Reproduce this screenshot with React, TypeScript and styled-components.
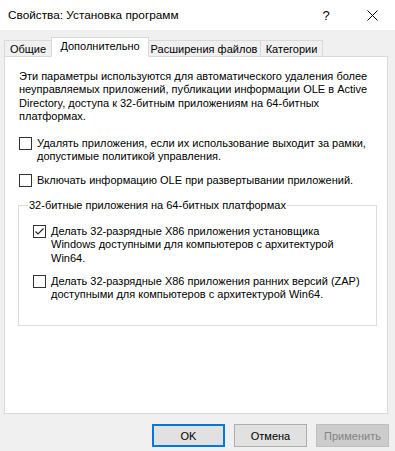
import React from "react";
import styled, { createGlobalStyle } from "styled-components";

const Global = createGlobalStyle`
  html, body { margin: 0; padding: 0; background: #f0f0f0; }
  body { font-family: "Liberation Sans", Arial, sans-serif; font-size: 11px; color: #000; }
`;

const Window = styled.div`
  width: 395px;
  height: 451px;
  background: #f0f0f0;
  display: flex;
  flex-direction: column;
  overflow: hidden;
`;

const TitleBar = styled.div`
  height: 30px;
  background: #ffffff;
  display: flex;
  align-items: center;
  padding-left: 8px;
  flex-shrink: 0;
`;

const Title = styled.div`
  flex: 1;
  font-size: 11.8px;
  white-space: nowrap;
`;

const TitleButton = styled.div`
  width: 46px;
  height: 30px;
  display: flex;
  align-items: center;
  justify-content: center;
  font-size: 13px;
`;

const Body = styled.div`
  padding: 8px 7px 0 4px;
  display: flex;
  flex-direction: column;
`;

const TabRow = styled.div`
  display: flex;
  align-items: flex-end;
  height: 19px;
  margin-bottom: -1px;
  position: relative;
  z-index: 1;
`;

const Tab = styled.div<{ $active?: boolean; $w: number }>`
  width: ${(p) => p.$w}px;
  height: ${(p) => (p.$active ? "20px" : "17px")};
  box-sizing: border-box;
  margin: 0 ${(p) => (p.$active ? "-1px" : "0")};
  border: 1px solid #d9d9d9;
  border-bottom: ${(p) => (p.$active ? "1px solid #ffffff" : "1px solid #d9d9d9")};
  border-left: ${(p) => (p.$active ? "1px solid #d9d9d9" : "none")};
  background: ${(p) => (p.$active ? "#ffffff" : "#f0f0f0")};
  display: flex;
  justify-content: center;
  align-items: flex-start;
  padding-top: 2px;
  white-space: nowrap;
  position: relative;
  z-index: ${(p) => (p.$active ? 2 : 1)};
  &:first-child { border-left: 1px solid #d9d9d9; }
`;

const Panel = styled.div`
  height: 358px;
  box-sizing: border-box;
  border: 1px solid #d9d9d9;
  background: #ffffff;
  padding: 13px 14px 0 14px;
  display: flex;
  flex-direction: column;
`;

const Para = styled.div`
  line-height: 13.3px;
  white-space: nowrap;
`;

const CheckRow = styled.div<{ $mt: number }>`
  display: flex;
  align-items: flex-start;
  gap: 5px;
  margin-top: ${(p) => p.$mt}px;
`;

const Box = styled.div`
  width: 13px;
  height: 13px;
  box-sizing: border-box;
  border: 1px solid #333333;
  background: #ffffff;
  flex-shrink: 0;
  display: flex;
  align-items: center;
  justify-content: center;
`;

const CheckLabel = styled.div`
  line-height: 13.3px;
  white-space: nowrap;
`;

const Group = styled.fieldset`
  margin: 12px 0 0 -1px;
  padding: 0 0 0 14px;
  border: 1px solid #dcdcdc;
  height: 127px;
  box-sizing: border-box;
  width: 359px;
  min-width: 0;
`;

const Legend = styled.legend`
  padding: 0 1px;
  margin-left: -5px;
  line-height: 13px;
`;

const Footer = styled.div`
  display: flex;
  justify-content: flex-end;
  gap: 9px;
  padding: 10px 6px 0 0;
`;

const Button = styled.div<{ $variant?: "default" | "disabled" }>`
  width: 73px;
  height: 23px;
  box-sizing: border-box;
  display: flex;
  align-items: center;
  justify-content: center;
  background: ${(p) => (p.$variant === "disabled" ? "#cccccc" : "#e1e1e1")};
  border: ${(p) =>
    p.$variant === "default" ? "2px solid #0078d7" : p.$variant === "disabled" ? "1px solid #bfbfbf" : "1px solid #adadad"};
  color: ${(p) => (p.$variant === "disabled" ? "#838383" : "#000")};
`;

const Check = () => (
  <svg width="11" height="11" viewBox="0 0 11 11">
    <path d="M1.5 5.5 L4 8 L9.5 2.5" fill="none" stroke="#222" strokeWidth="1.1" />
  </svg>
);

const CheckBox = ({ checked }: { checked?: boolean }) => <Box>{checked && <Check />}</Box>;

export default function App() {
  return (
    <Window>
      <Global />
      <TitleBar>
        <Title>Свойства: Установка программ</Title>
        <TitleButton>?</TitleButton>
        <TitleButton>
          <svg width="11" height="11" viewBox="0 0 11 11">
            <path d="M0.5 0.5 L10.5 10.5 M10.5 0.5 L0.5 10.5" stroke="#000" strokeWidth="1" />
          </svg>
        </TitleButton>
      </TitleBar>
      <Body>
        <TabRow>
          <Tab $w={48}>Общие</Tab>
          <Tab $w={98} $active>Дополнительно</Tab>
          <Tab $w={113}>Расширения файлов</Tab>
          <Tab $w={62}>Категории</Tab>
        </TabRow>
        <Panel>
          <Para>
            Эти параметры используются для автоматического удаления более
            <br />
            неуправляемых приложений, публикации информации OLE в Active
            <br />
            Directory, доступа к 32-битным приложениям на 64-битных
            <br />
            платформах.
          </Para>
          <CheckRow $mt={14}>
            <CheckBox />
            <CheckLabel>
              Удалять приложения, если их использование выходит за рамки,
              <br />
              допустимые политикой управления.
            </CheckLabel>
          </CheckRow>
          <CheckRow $mt={10}>
            <CheckBox />
            <CheckLabel>Включать информацию OLE при развертывании приложений.</CheckLabel>
          </CheckRow>
          <Group>
            <Legend>32-битные приложения на 64-битных платформах</Legend>
            <CheckRow $mt={13}>
              <CheckBox checked />
              <CheckLabel>
                Делать 32-разрядные X86 приложения установщика
                <br />
                Windows доступными для компьютеров с архитектурой
                <br />
                Win64.
              </CheckLabel>
            </CheckRow>
            <CheckRow $mt={10}>
              <CheckBox />
              <CheckLabel>
                Делать 32-разрядные X86 приложения ранних версий (ZAP)
                <br />
                доступными для компьютеров с архитектурой Win64.
              </CheckLabel>
            </CheckRow>
          </Group>
        </Panel>
      </Body>
      <Footer>
        <Button $variant="default">OK</Button>
        <Button>Отмена</Button>
        <Button $variant="disabled">Применить</Button>
      </Footer>
    </Window>
  );
}
